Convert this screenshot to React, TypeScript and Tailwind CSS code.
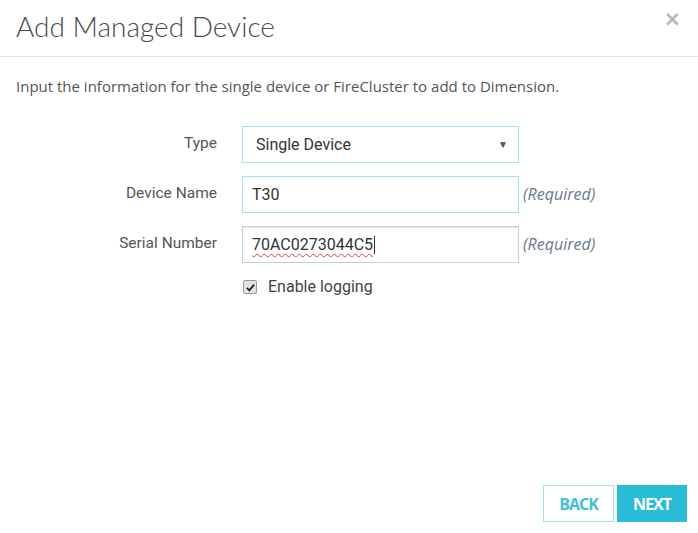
import { useState } from 'react';

export default function App() {
  const [logging, setLogging] = useState(true);

  return (
    <div className="relative h-[533px] w-[698px] overflow-hidden bg-white">
      <header className="flex h-[57px] items-start justify-between border-b border-[#e5e5e5] pl-4 pr-[17px]">
        <h1 className="mt-[8px] text-[28px] font-light leading-[36px] text-[#4a4a4a] [font-family:Lato,sans-serif]">
          Add Managed Device
        </h1>
        <button className="mt-[8px] text-[21px] font-bold leading-[22px] text-[#b5b5b5] [font-family:'DejaVu_Sans',sans-serif]">
          ×
        </button>
      </header>

      <p className="mt-[19px] pl-4 text-[15px] leading-5 text-[#555] [font-family:'Open_Sans',sans-serif]">
        Input the information for the single device or FireCluster to add to Dimension.
      </p>

      <div className="mt-[30px] flex flex-col gap-[13px] text-[15.5px] text-[#555] [font-family:Roboto,sans-serif]">
        <div className="flex items-start">
          <label className="w-[217px] pt-[6px] text-right">Type</label>
          <div className="ml-[25px] flex h-[37px] w-[277px] items-center justify-between border border-[#9fe3ef] pl-[13px] pr-[10px] text-[16px] text-[#333]">
            <span>Single Device</span>
            <span className="text-[10px] text-[#555]">▼</span>
          </div>
        </div>

        <div className="flex items-start">
          <label className="w-[217px] pt-[6px] text-right">Device Name</label>
          <div className="ml-[25px] flex h-[37px] w-[277px] items-center border border-[#9fe3ef] pl-[9px] text-[16px] text-[#333]">
            T30
          </div>
          <span className="ml-[4px] pt-[6px] text-[16px] italic text-[#6b7a8c] [font-family:'Open_Sans',sans-serif]">(Required)</span>
        </div>

        <div className="flex items-start">
          <label className="w-[217px] pt-[6px] text-right">Serial Number</label>
          <div className="ml-[25px] flex h-[37px] w-[277px] items-center border border-[#c9cfd3] pl-[9px] text-[16px] text-[#333] shadow-[inset_0_1px_2px_rgba(0,0,0,0.12)]">
            <span className="underline decoration-[#e04040] decoration-wavy decoration-1 underline-offset-[3px]">70AC0273044C5</span>
            <span className="ml-[1px] h-[18px] w-px bg-[#333]" />
          </div>
          <span className="ml-[4px] pt-[6px] text-[16px] italic text-[#6b7a8c] [font-family:'Open_Sans',sans-serif]">(Required)</span>
        </div>
      </div>

      <label className="ml-[243px] mt-[12px] flex items-center gap-[11px] text-[16px] text-[#444] [font-family:Roboto,sans-serif]">
        <button
          onClick={() => setLogging(!logging)}
          className="flex h-[14px] w-[14px] items-center justify-center rounded-[2px] border border-[#9a9a9a] bg-[#e3e3e3]"
        >
          {logging && (
            <svg viewBox="0 0 12 12" className="h-[11px] w-[11px]">
              <path d="M2 6.5 L4.7 9.2 L10 2.8" fill="none" stroke="#222" strokeWidth="2" />
            </svg>
          )}
        </button>
        Enable logging
      </label>

      <div className="absolute bottom-[11px] right-[11px] flex gap-[3px] [font-family:'Open_Sans',sans-serif]">
        <button className="flex h-[37px] w-[71px] items-center justify-center border border-[#9fe3ef] text-[16px] font-bold tracking-[-1px] text-[#3fc0da]">
          BACK
        </button>
        <button className="flex h-[37px] w-[70px] items-center justify-center bg-[#28bcd7] text-[16px] font-bold tracking-[-1px] text-white">
          NEXT
        </button>
      </div>
    </div>
  );
}
